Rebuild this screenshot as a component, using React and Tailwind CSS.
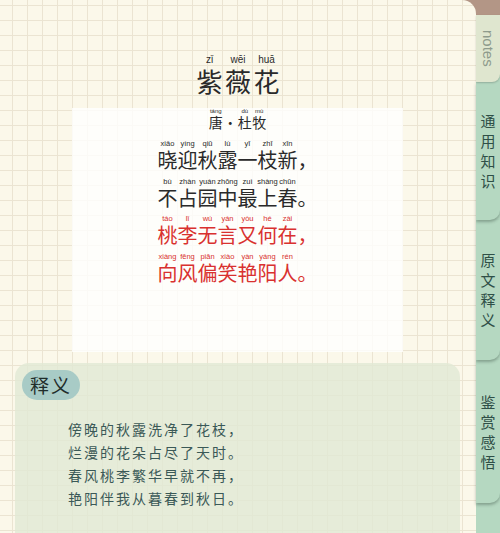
import React from "react";

const poem = [
  {
    red: false,
    items: [
      ["xiǎo", "晓"], ["yíng", "迎"], ["qiū", "秋"], ["lù", "露"], ["yī", "一"], ["zhī", "枝"], ["xīn", "新"], ["", "，"],
    ],
  },
  {
    red: false,
    items: [
      ["bù", "不"], ["zhàn", "占"], ["yuán", "园"], ["zhōng", "中"], ["zuì", "最"], ["shàng", "上"], ["chūn", "春"], ["", "。"],
    ],
  },
  {
    red: true,
    items: [
      ["táo", "桃"], ["lǐ", "李"], ["wú", "无"], ["yán", "言"], ["yòu", "又"], ["hé", "何"], ["zài", "在"], ["", "，"],
    ],
  },
  {
    red: true,
    items: [
      ["xiàng", "向"], ["fēng", "风"], ["piān", "偏"], ["xiào", "笑"], ["yàn", "艳"], ["yáng", "阳"], ["rén", "人"], ["", "。"],
    ],
  },
];

const meaning = [
  "傍晚的秋露洗净了花枝，",
  "烂漫的花朵占尽了天时。",
  "春风桃李繁华早就不再，",
  "艳阳伴我从暮春到秋日。",
];

const tabs = [
  { label: "通用知识", h: "h-[138px]", z: "z-30" },
  { label: "原文释义", h: "h-[140px]", z: "z-20" },
  { label: "鉴赏感悟", h: "h-[143px]", z: "z-10" },
];

const cjk = "font-['Noto_Sans_CJK_SC',sans-serif]";
const latin = "font-['Liberation_Sans',Arial,sans-serif]";

function PoemLine({ line }) {
  const color = line.red ? "text-[#d9312f]" : "text-[#2a2a2a]";
  return (
    <div className={`flex justify-center ${color}`}>
      {line.items.map(([py, ch], i) => (
        <div key={i} className="flex w-[20px] flex-col items-center">
          <span className={`${latin} h-[10px] whitespace-nowrap text-[7.5px] leading-[10px]`}>{py}</span>
          <span className={`${cjk} text-[20px] leading-[22px]`}>{ch}</span>
        </div>
      ))}
    </div>
  );
}

export default function App() {
  return (
    <div className="flex h-[533px] w-[500px] overflow-hidden bg-[#b39686]">
      {/* paper */}
      <div className="flex w-[476px] flex-col rounded-tr-[14px] bg-[#fbf8ea] bg-[linear-gradient(to_right,#ebe4d2_1px,transparent_1px),linear-gradient(to_bottom,#ebe4d2_1px,transparent_1px)] bg-[size:15px_15px] bg-[position:12px_5px]">
        {/* title */}
        <div className="flex justify-center pt-[54px] text-[#2a2a2a]">
          {[["zǐ", "紫"], ["wēi", "薇"], ["huā", "花"]].map(([py, ch]) => (
            <div key={ch} className="flex w-[28.5px] flex-col items-center">
              <span className={`${latin} text-[10px] leading-[12px]`}>{py}</span>
              <span className={`${cjk} mt-[2px] text-[26px] leading-[26px]`}>{ch}</span>
            </div>
          ))}
        </div>

        {/* poem card */}
        <div className="ml-[72px] mt-[14px] h-[244px] w-[331px] bg-white/80">
          <div className="flex justify-center text-[#2a2a2a]">
            {[["táng", "唐"], ["", "・"], ["dù", "杜"], ["mù", "牧"]].map(([py, ch], i) => (
              <div key={i} className="flex w-[14.5px] flex-col items-center">
                <span className={`${latin} h-[7px] text-[6px] leading-[7px]`}>{py}</span>
                <span className={`${cjk} text-[14px] leading-[14px]`}>{ch}</span>
              </div>
            ))}
          </div>
          <div className="mt-[10px] flex flex-col gap-[5.7px]">
            {poem.map((line, i) => (
              <PoemLine key={i} line={line} />
            ))}
          </div>
        </div>

        {/* meaning panel */}
        <div className="ml-[15px] mt-[11px] w-[445px] flex-1 rounded-t-[14px] bg-[#e1e9d5]/80 pl-[7px] pt-[7px]">
          <div className={`${cjk} flex h-[30px] w-[58px] items-center justify-center rounded-full bg-[#a8cbc6] text-[19px] tracking-[2px] text-[#1f2d2b]`}>
            释义
          </div>
          <div className={`${cjk} mt-[18px] pl-[46px] text-[14px] leading-[23px] tracking-[2px] text-[#3b5957]`}>
            {meaning.map((t) => (
              <div key={t}>{t}</div>
            ))}
          </div>
        </div>
      </div>

      {/* tabs */}
      <div className="flex w-[24px] flex-col">
        <div className="h-[15px] shrink-0" />
        <div className="flex flex-1 flex-col bg-[#b5d8c1]">
          <div className="relative z-40 flex h-[67px] shrink-0 items-center justify-center rounded-br-[8px] bg-[#dfe6cf] shadow-[0_1px_2px_rgba(0,0,0,0.2)]">
            <span className={`${latin} text-[15px] leading-none text-[#8e9b8c] [writing-mode:vertical-rl]`}>notes</span>
          </div>
          {tabs.map((t) => (
            <div
              key={t.label}
              className={`relative ${t.z} ${t.h} flex shrink-0 flex-col items-center justify-center rounded-br-[10px] bg-[#b5d8c1] shadow-[0_2px_3px_rgba(40,60,50,0.35)]`}
            >
              {t.label.split("").map((c, i) => (
                <span key={i} className={`${cjk} text-[15px] leading-[20px] text-[#2f4f47]`}>
                  {c}
                </span>
              ))}
            </div>
          ))}
          <div className="flex-1 bg-[#b5d8c1]" />
        </div>
      </div>
    </div>
  );
}
